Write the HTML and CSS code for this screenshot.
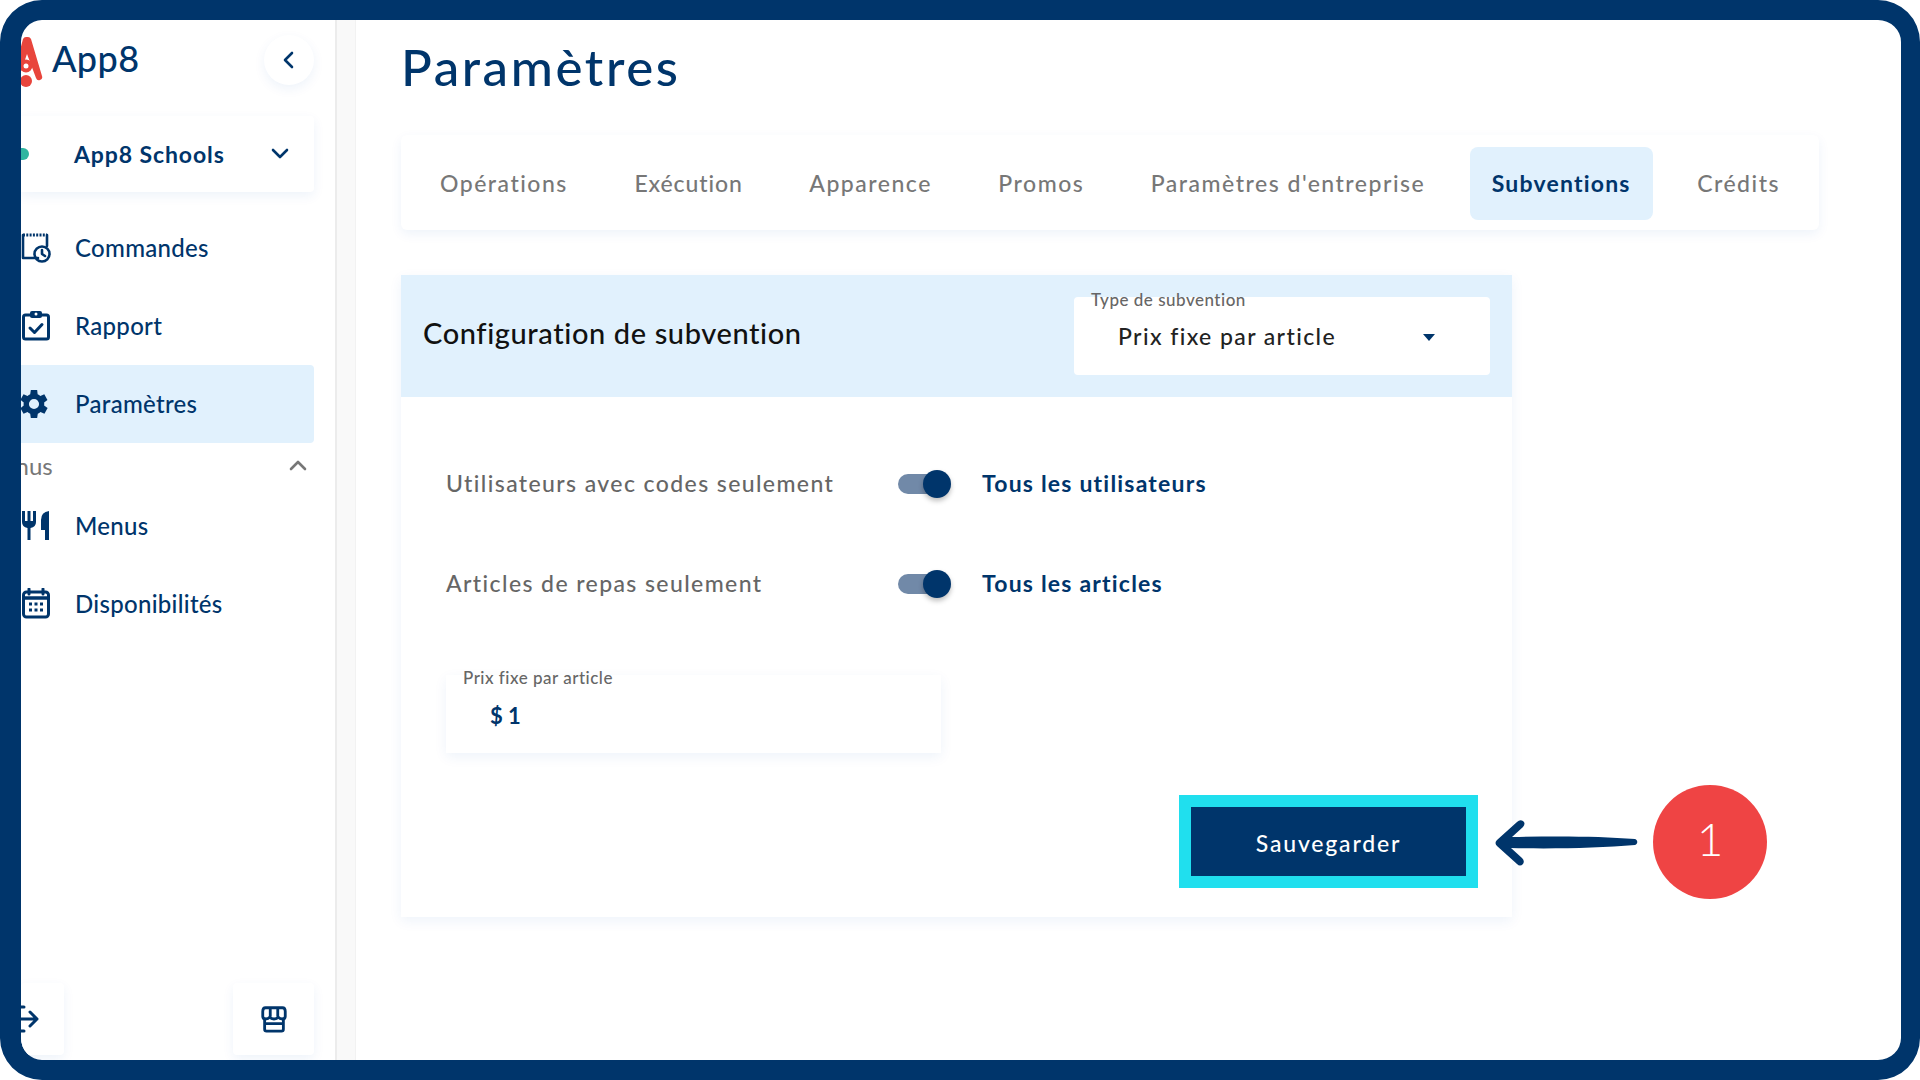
FILE: index.html
```html
<!DOCTYPE html>
<html lang="fr">
<head>
    <meta charset="UTF-8">
    <meta name="viewport" content="width=device-width, initial-scale=1.0">
    <title>App8 - Paramètres</title>
    <link rel="stylesheet" href="styles.css">
</head>
<body>
    <div class="frame">
        <aside class="sidebar">
            <div class="brand">
                <div class="logo">
                    <svg class="logo-mark" viewBox="0 0 32 50" width="32" height="50">
                        <path d="M12 2q1-2 3-2h2q2 0 3 2l11 37q1 3-2 4-3 1-4-2L16 17 8 40H2Z" fill="#e8453c"/>
                        <circle cx="15" cy="29" r="6.500" fill="#e8453c"/>
                        <circle cx="15" cy="29" r="2.500" fill="#fff"/>
                        <circle cx="15" cy="44" r="6" fill="#e8453c"/>
                    </svg>
                    <span class="logo-text">App8</span>
                </div>
                <button class="collapse">
                    <svg viewBox="0 0 24 24" width="24" height="24"><path d="M15 5l-7 7 7 7" class="line"/></svg>
                </button>
            </div>

            <div class="org">
                <span class="org-dot"></span>
                <span class="org-name">App8 Schools</span>
                <svg viewBox="0 0 24 24" width="24" height="24"><path d="M5 8l7 7 7-7" class="line"/></svg>
            </div>

            <nav class="nav">
                <a class="nav-item">
                    <svg viewBox="0 0 32 32" width="32" height="32">
                        <path d="M18 26H3V3M27 3v11" class="thin"/>
                        <path d="M3 3h24" stroke="#00356b" stroke-width="3" stroke-dasharray="2 1.300"/>
                        <circle cx="22" cy="22" r="7.500" class="thin"/>
                        <path d="M22 18v4l3 2" class="thin"/>
                    </svg>
                    Commandes
                </a>
                <a class="nav-item">
                    <svg viewBox="0 0 32 32" width="32" height="32">
                        <rect x="3.500" y="5" width="25" height="24" rx="2" class="thick"/>
                        <rect x="10" y="1" width="12" height="7" rx="2" fill="#00356b"/>
                        <circle cx="16" cy="4" r="1.500" fill="#fff"/>
                        <path d="M10 18l4.500 4.500 7.500-8" class="thick"/>
                    </svg>
                    Rapport
                </a>
                <a class="nav-item active">
                    <svg class="gear" viewBox="1 0 24 24" width="38" height="38">
                        <path fill="#00356b" fill-rule="evenodd" d="M19.400 13a7.500 7.500 0 0 0 0-2l2.100-1.600-2-3.500-2.500 1a7.400 7.400 0 0 0-1.700-1L15 3.200h-4l-.4 2.700a7.400 7.400 0 0 0-1.700 1l-2.500-1-2 3.500L6.500 11a7.500 7.500 0 0 0 0 2l-2.100 1.600 2 3.500 2.500-1a7.400 7.400 0 0 0 1.700 1l.4 2.700h4l.4-2.700a7.400 7.400 0 0 0 1.700-1l2.500 1 2-3.500ZM13 15.200a3.200 3.200 0 1 1 0-6.400 3.200 3.200 0 0 1 0 6.400Z"/>
                    </svg>
                    Paramètres
                </a>
                <div class="nav-group">
                    <span>Menus</span>
                    <svg viewBox="0 0 24 24" width="24" height="24"><path d="M5 16l7-7 7 7" class="line gray"/></svg>
                </div>
                <a class="nav-item">
                    <svg viewBox="0 0 32 32" width="32" height="32">
                        <path fill="#00356b" d="M2 1h3v10h2.500V1h3v10H13V1h3v11q0 5-5.500 6v12h-3V18Q2 17 2 12ZM29 1v29h-4V20h-4V10Q21 2 29 1Z"/>
                    </svg>
                    Menus
                </a>
                <a class="nav-item">
                    <svg viewBox="0 0 32 32" width="32" height="32">
                        <rect x="3.500" y="4" width="25" height="25" rx="3" class="thick"/>
                        <path d="M3.500 10h25" stroke="#00356b" stroke-width="3.500"/>
                        <path d="M9 1v5M23 1v5" class="thick"/>
                        <path d="M9 16h3M14.500 16h3M20 16h3M9 22h3M14.500 22h3M20 22h3" stroke="#00356b" stroke-width="3"/>
                    </svg>
                    Disponibilités
                </a>
            </nav>

            <div class="sidebar-foot">
                <button class="foot-btn logout">
                    <svg viewBox="0 0 32 32" width="32" height="32"><path d="M10 16h20M23 9l7 7-7 7M14 4h3M14 28h3" class="thick"/></svg>
                </button>
                <button class="foot-btn">
                    <svg viewBox="0 0 32 32" width="30" height="30">
                        <path d="M6 16v11q0 2 2 2h16q2 0 2-2V16M6 21h20" class="thick"/>
                        <path d="M7 4h18q3 0 3 4v5q0 3-3 3-3 0-4.500-2-1.500 2-4.500 2t-4.500-2Q10 16 7 16q-3 0-3-3V8q0-4 3-4ZM12 4v9M20 4v9" class="thick"/>
                    </svg>
                </button>
            </div>
        </aside>

        <div class="gutter"></div>

        <main class="content">
            <h1 class="page-title">Paramètres</h1>

            <div class="tabs">
                <a class="tab">Opérations</a>
                <a class="tab tight">Exécution</a>
                <a class="tab">Apparence</a>
                <a class="tab">Promos</a>
                <a class="tab">Paramètres d'entreprise</a>
                <a class="tab active">Subventions</a>
                <a class="tab">Crédits</a>
            </div>

            <section class="card">
                <div class="card-head">
                    <h2>Configuration de subvention</h2>
                    <div class="select">
                        <label>Type de subvention</label>
                        <span>Prix fixe par article</span>
                        <i class="caret"></i>
                    </div>
                </div>
                <div class="card-body">
                    <div class="row">
                        <span class="row-label">Utilisateurs avec codes seulement</span>
                        <span class="toggle"><i></i></span>
                        <span class="row-value">Tous les utilisateurs</span>
                    </div>
                    <div class="row">
                        <span class="row-label">Articles de repas seulement</span>
                        <span class="toggle"><i></i></span>
                        <span class="row-value">Tous les articles</span>
                    </div>
                    <div class="price">
                        <label>Prix fixe par article</label>
                        <span>$ 1</span>
                    </div>
                    <div class="actions">
                        <button class="save">Sauvegarder</button>
                    </div>
                </div>
            </section>

            <!-- annotation de tutoriel -->
            <svg class="arrow" viewBox="0 0 144 46" width="144" height="46">
                <path d="M141 19C105 16 60 16 18 17L29 7Q32 3 29 1 26-1 23 2L3 20Q0 23 3 26L23 44Q26 47 29 44 31 41 28 38L17 28C60 29 105 28 141 25 144 24 144 20 141 19Z" fill="#00356b"/>
            </svg>
            <div class="step">1</div>
        </main>
    </div>
</body>
</html>
```

FILE: styles.css
```css
:root {
    --navy: #00356b;
    --pale: #e1f1fd;
    --gray: #666;
    --shadow: 0 4px 12px rgba(0, 80, 180, 0.07);
}

* {
    box-sizing: border-box;
    margin: 0;
    padding: 0;
}

body {
    font-family: 'Lato', sans-serif;
    color: var(--navy);
    background-color: white;
    width: 1920px;
    height: 1080px;
    overflow: hidden;
}

button {
    font-family: inherit;
    border: none;
    background-color: white;
}

.line {
    fill: none;
    stroke: var(--navy);
    stroke-width: 2.6;
    stroke-linecap: round;
    stroke-linejoin: round;
}

.line.gray {
    stroke: #777;
}

.thin,
.thick {
    fill: none;
    stroke: var(--navy);
    stroke-linecap: round;
    stroke-linejoin: round;
}

.thin {
    stroke-width: 2.6;
}

.thick {
    stroke-width: 3;
}

.frame {
    display: flex;
    height: 1080px;
    border: solid var(--navy);
    border-width: 20px 19px 20px 21px;
    border-radius: 42px;
    overflow: hidden;
    position: relative;
    background-color: white;
}

/* sidebar */
.sidebar {
    width: 314px;
    flex-shrink: 0;
    display: flex;
    flex-direction: column;
    padding: 0 21px 5px 0;
}

.brand {
    height: 96px;
    display: flex;
    align-items: center;
    justify-content: space-between;
    padding-bottom: 16px;
}

.logo {
    display: flex;
    align-items: center;
    gap: 9px;
    margin-left: -10px;
}

.logo-mark {
    margin-top: 4px;
}

.logo-text {
    font-size: 36px;
    font-weight: 500;
    letter-spacing: 0.4px;
    margin-top: -4px;
}

.collapse {
    width: 50px;
    height: 50px;
    border-radius: 50%;
    box-shadow: var(--shadow);
    display: flex;
    align-items: center;
    justify-content: center;
    margin-right: 0;
}

.org {
    height: 76px;
    display: flex;
    align-items: center;
    box-shadow: var(--shadow);
    border-radius: 0 4px 4px 0;
    padding-left: 53px;
    padding-right: 22px;
}

.org-dot {
    width: 8px;
    height: 12px;
    margin-left: -53px;
    margin-right: 45px;
    background-color: #2fb5a0;
    border-radius: 0 6px 6px 0;
}

.org-name {
    flex: 1;
    font-size: 23px;
    font-weight: 700;
    letter-spacing: 0.9px;
}

.nav {
    flex: 1;
    padding-top: 17px;
}

.nav-item {
    height: 78px;
    display: flex;
    align-items: center;
    gap: 23px;
    font-size: 24px;
    font-weight: 500;
    letter-spacing: 0.3px;
    line-height: 28px;
    padding-bottom: 1px;
    border-radius: 0 4px 4px 0;
}

.nav-item svg {
    width: 32px;
    margin-left: -1px;
    flex-shrink: 0;
}

.nav-item svg.gear {
    width: 38px;
    margin-left: -6px;
    margin-right: -1px;
}

.nav-item.active {
    background-color: var(--pale);
}

.nav-group {
    height: 44px;
    display: flex;
    align-items: center;
    justify-content: space-between;
    font-size: 24px;
    color: #777;
    padding-right: 4px;
}

.nav-group span {
    margin-left: -40px;
}

.sidebar-foot {
    display: flex;
    justify-content: space-between;
}

.foot-btn {
    width: 81px;
    height: 72px;
    box-shadow: var(--shadow);
    border-radius: 4px;
    display: flex;
    align-items: center;
    justify-content: center;
}

.foot-btn.logout {
    width: 43px;
    justify-content: flex-start;
}

.foot-btn.logout svg {
    margin-left: -14px;
    flex-shrink: 0;
}

.gutter {
    width: 21px;
    flex-shrink: 0;
    background-color: #f9f9f9;
    border-left: 2px solid #ececec;
    border-right: 1px solid #f2f2f2;
}

/* main */
.content {
    flex: 1;
    padding-left: 45px;
}

.page-title {
    font-size: 51px;
    font-weight: 500;
    line-height: 60px;
    padding-top: 17px;
    height: 115px;
    letter-spacing: 2.6px;
}

.tabs {
    width: 1418px;
    height: 95px;
    display: flex;
    align-items: center;
    justify-content: space-between;
    padding: 2px 17px 0;
    box-shadow: var(--shadow);
    border-radius: 6px;
    margin-bottom: 45px;
}

.tab {
    font-size: 23px;
    font-weight: 500;
    color: #777;
    letter-spacing: 1.5px;
    padding: 0 22px;
    height: 73px;
    line-height: 73px;
    border-radius: 8px;
}

.tab.tight {
    letter-spacing: 0.9px;
}

.tab.active {
    background-color: var(--pale);
    color: var(--navy);
    font-weight: 700;
    letter-spacing: 1.2px;
}

.card {
    width: 1111px;
    height: 642px;
    box-shadow: var(--shadow);
}

.card-head {
    height: 122px;
    background-color: var(--pale);
    display: flex;
    align-items: center;
    justify-content: space-between;
    padding: 0 22px;
}

.card-head h2 {
    font-size: 29px;
    font-weight: 500;
    color: #111;
    letter-spacing: 0.6px;
    margin-bottom: 8px;
}

.select {
    width: 416px;
    height: 78px;
    background-color: white;
    border-radius: 4px;
    position: relative;
    display: flex;
    align-items: center;
    padding: 0 44px;
    font-size: 23px;
    font-weight: 500;
    letter-spacing: 1.4px;
    color: #222;
}

.select label,
.price label {
    position: absolute;
    left: 17px;
    top: -8px;
    font-size: 17px;
    font-weight: 500;
    letter-spacing: 0.5px;
    color: var(--gray);
}

.caret {
    position: absolute;
    right: 55px;
    top: 37px;
    border: 6px solid transparent;
    border-top: 7px solid var(--navy);
    border-bottom: none;
}

.card-body {
    padding: 59px 45px 0;
}

.row {
    height: 100px;
    display: flex;
    align-items: flex-start;
    padding-top: 13px;
    font-size: 23px;
    font-weight: 500;
    letter-spacing: 1.4px;
}

.row-label {
    width: 452px;
    color: var(--gray);
}

.toggle {
    width: 52px;
    height: 20px;
    margin-top: 5px;
    margin-right: 32px;
    border-radius: 10px;
    background-color: #7189a8;
    position: relative;
}

.toggle i {
    position: absolute;
    right: -1px;
    top: -4px;
    width: 28px;
    height: 28px;
    border-radius: 50%;
    background-color: var(--navy);
    box-shadow: 0 3px 5px rgba(0, 0, 0, 0.25);
}

.row-value {
    font-weight: 700;
    letter-spacing: 1.2px;
}

.price {
    width: 495px;
    height: 78px;
    margin-top: 19px;
    position: relative;
    box-shadow: var(--shadow);
    display: flex;
    align-items: center;
    padding-left: 44px;
    padding-top: 3px;
    font-size: 22px;
    font-weight: 700;
}

.price label {
    top: -8px;
}

.actions {
    display: flex;
    justify-content: flex-end;
    margin-top: 42px;
    margin-right: -11px;
}

.save {
    width: 299px;
    height: 93px;
    background-color: var(--navy);
    border: 12px solid #20dfee;
    color: white;
    font-size: 23px;
    font-weight: 500;
    letter-spacing: 1.8px;
    padding-top: 3px;
}

.arrow {
    position: absolute;
    left: 1473px;
    top: 800px;
}

.step {
    position: absolute;
    left: 1632px;
    top: 765px;
    width: 114px;
    height: 114px;
    border-radius: 50%;
    background-color: #ef4444;
    color: white;
    font-size: 46px;
    font-weight: 300;
    display: flex;
    align-items: center;
    justify-content: center;
    padding-bottom: 8px;
}
```
